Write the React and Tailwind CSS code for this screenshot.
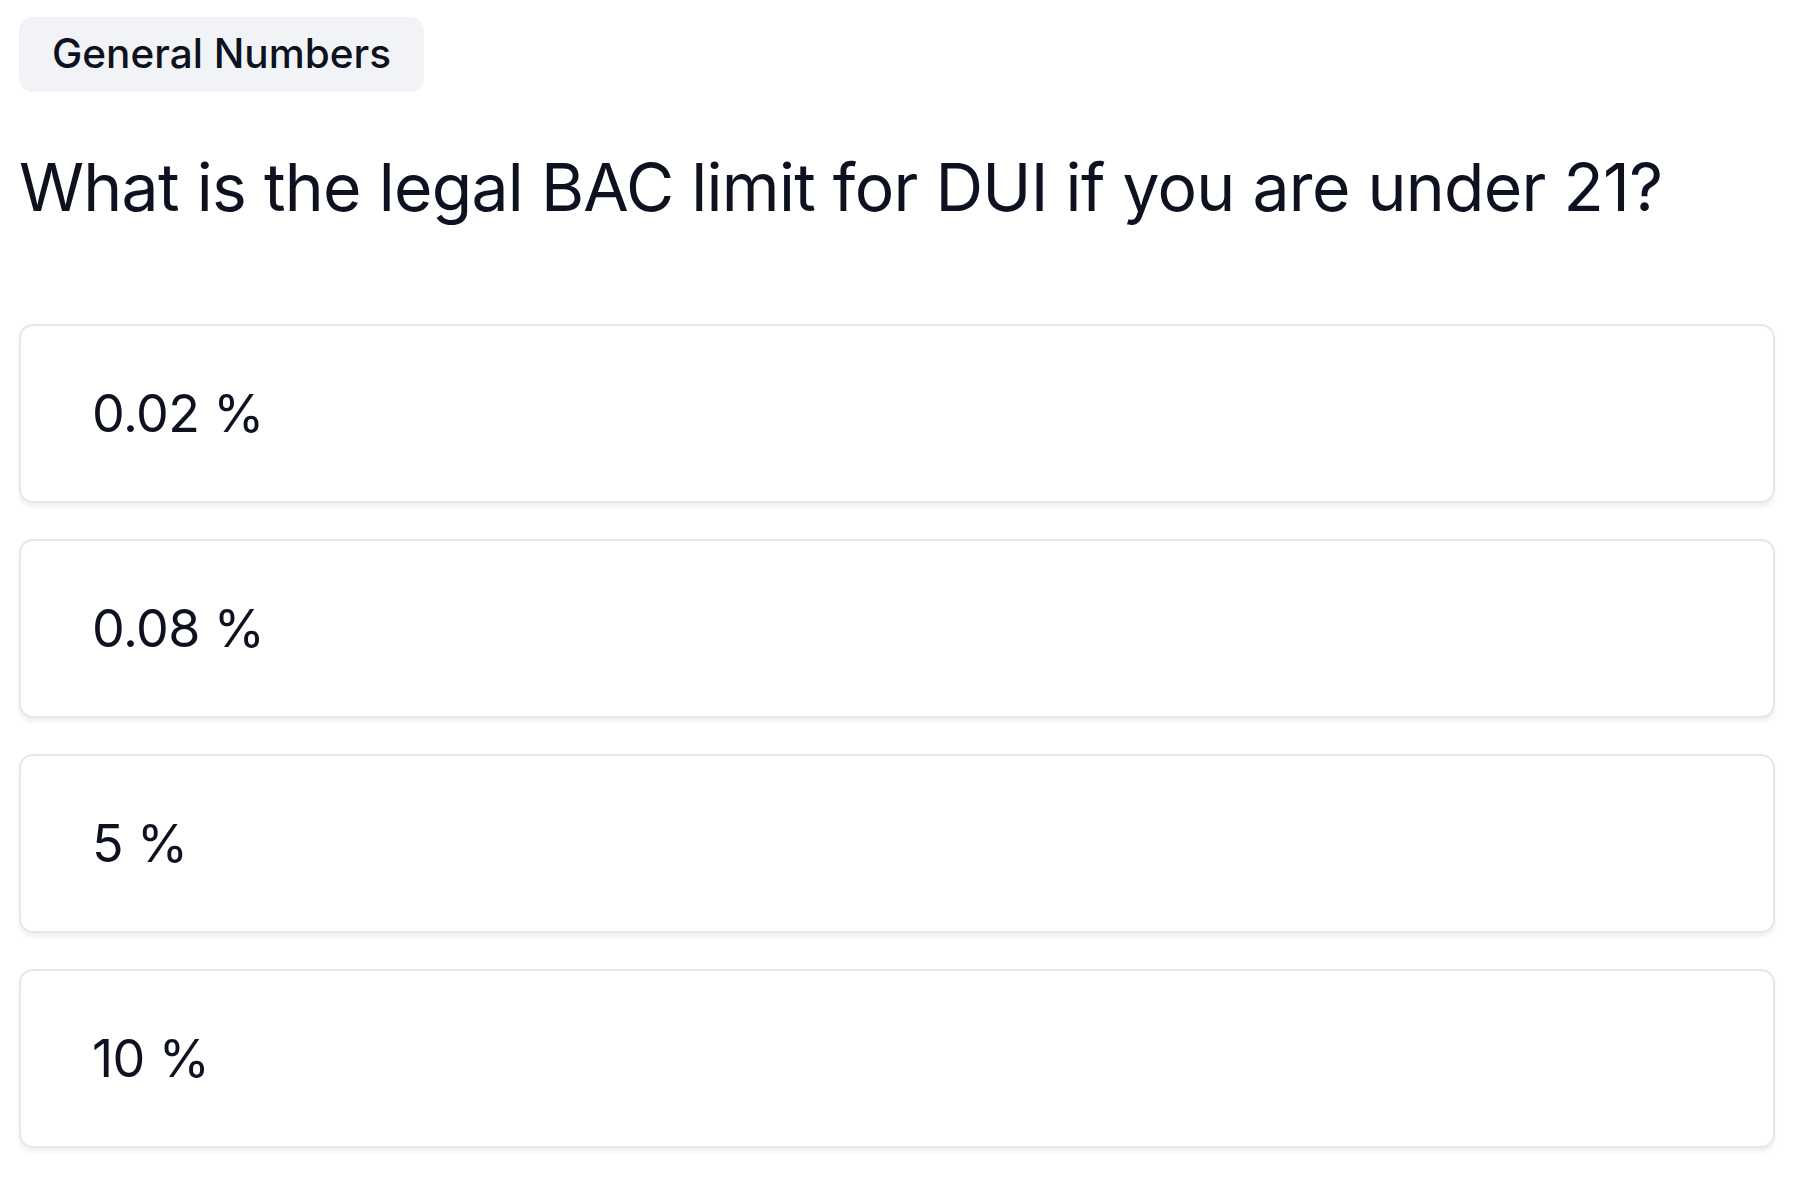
const options = ['0.02 %', '0.08 %', '5 %', '10 %'];

export default function App() {
  return (
    <div className="min-h-screen bg-white pt-[17px] pl-[19px] pr-[25px] font-['Inter',sans-serif] text-[#0e1120]">
      <div className="inline-flex h-[75px] items-center rounded-[14px] bg-[#f2f3f6] px-[33px] text-[40.5px] font-medium">
        General Numbers
      </div>

      <h1 className="mt-[55px] text-[66px] leading-[80px] font-normal tracking-[-0.72px]">
        What is the legal BAC limit for DUI if you are under 21?
      </h1>

      <div className="mt-[97px] flex flex-col gap-[36px]">
        {options.map((opt) => (
          <button
            key={opt}
            className="flex h-[179px] w-full items-center rounded-[14px] border-2 border-[#e6e7eb] bg-white pl-[71px] text-left text-[52px] tracking-[-0.6px] shadow-[0_4px_4px_rgba(20,20,40,0.06)]"
          >
            {opt}
          </button>
        ))}
      </div>
    </div>
  );
}
